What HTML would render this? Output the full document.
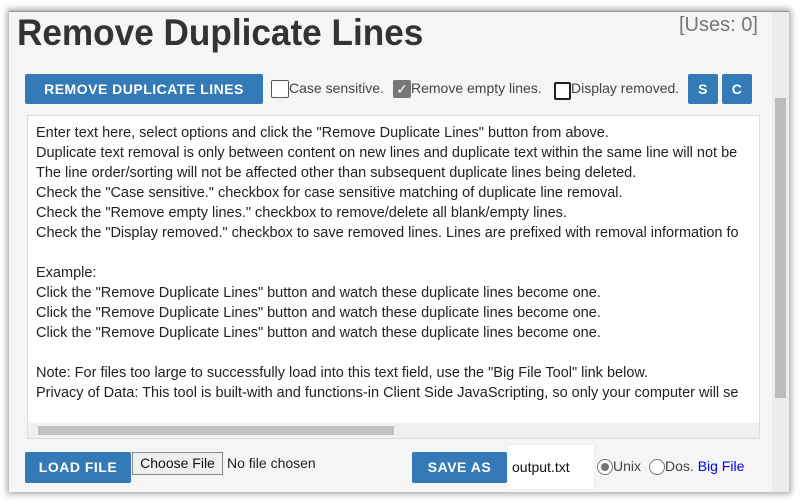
<!DOCTYPE html><html><head><style>
body{margin:0;width:800px;height:502px;background:#fff;font-family:"Liberation Sans",Arial,sans-serif;overflow:hidden;position:relative}
.win{position:absolute;left:9px;top:11px;width:780px;height:480px;background:#f5f5f5;box-shadow:0 0 6px 2px rgba(0,0,0,.35);border-top:1px solid #999}
.vs{position:absolute;left:763px;top:0;width:17px;height:480px;background:#ececec;z-index:5}
.vt{position:absolute;left:3px;top:86px;width:11px;height:300px;background:#bdbdbd}
h1{position:absolute;left:8px;top:0px;margin:0;font-size:37px;font-weight:bold;color:#333;transform:scaleX(.95);transform-origin:left}
.uses{position:absolute;left:670px;top:2px;font-size:20px;color:#777}
.btn{position:absolute;background:#337ab7;color:#fff;font-weight:bold;font-size:14px;text-align:center;border-radius:2px;letter-spacing:.5px}
.lbl{position:absolute;font-size:14px;color:#444}
.cb{position:absolute;width:16px;height:16px;border:1px solid #555;background:#fff;border-radius:2px}
.ta{position:absolute;left:18px;top:103px;width:731px;height:322px;background:#fff;border:1px solid #ddd;overflow:hidden}
.ta pre{margin:0;padding:7px 0 0 8px;font-family:inherit;font-size:14.5px;line-height:20px;color:#222;white-space:pre}
.hs{position:absolute;left:0;bottom:0;width:731px;height:15px;background:#f0f0f0}
.ht{position:absolute;left:10px;top:3px;width:356px;height:9px;background:#c1c1c1}
.vs2{position:absolute;right:0;top:0;width:14px;height:307px;background:#fff}
</style></head><body><div class="win">
<h1>Remove Duplicate Lines</h1>
<div class="uses">[Uses: 0]</div>
<div class="btn" style="left:16px;top:62px;width:238px;height:30px;line-height:30px">REMOVE DUPLICATE LINES</div>
<div class="cb" style="left:262px;top:68px"></div><div class="lbl" style="left:280px;top:68px">Case sensitive.</div>
<div class="cb" style="left:384px;top:68px;background:#777;border-color:#777;color:#fff;font-size:14px;line-height:16px;text-align:center">✓</div><div class="lbl" style="left:402px;top:68px">Remove empty lines.</div>
<div class="cb" style="left:545px;top:70px;width:13px;height:14px;border:2px solid #222"></div><div class="lbl" style="left:562px;top:68px">Display removed.</div>
<div class="btn" style="left:679px;top:62px;width:30px;height:30px;line-height:30px">S</div>
<div class="btn" style="left:713px;top:62px;width:30px;height:30px;line-height:30px">C</div>
<div class="ta"><pre>Enter text here, select options and click the "Remove Duplicate Lines" button from above.
Duplicate text removal is only between content on new lines and duplicate text within the same line will not be
The line order/sorting will not be affected other than subsequent duplicate lines being deleted.
Check the "Case sensitive." checkbox for case sensitive matching of duplicate line removal.
Check the "Remove empty lines." checkbox to remove/delete all blank/empty lines.
Check the "Display removed." checkbox to save removed lines. Lines are prefixed with removal information fo

Example:
Click the "Remove Duplicate Lines" button and watch these duplicate lines become one.
Click the "Remove Duplicate Lines" button and watch these duplicate lines become one.
Click the "Remove Duplicate Lines" button and watch these duplicate lines become one.

Note: For files too large to successfully load into this text field, use the "Big File Tool" link below.
Privacy of Data: This tool is built-with and functions-in Client Side JavaScripting, so only your computer will se</pre>
<div class="vs2"></div><div class="hs"><div class="ht"></div></div></div>
<div class="btn" style="left:16px;top:440px;width:106px;height:31px;line-height:31px">LOAD FILE</div>
<div style="position:absolute;left:123px;top:440px;width:89px;height:21px;border:1px solid #888;background:#efefef;font-size:14px;line-height:21px;text-align:center;color:#111">Choose File</div>
<div class="lbl" style="left:218px;top:443px;color:#222">No file chosen</div>
<div class="btn" style="left:403px;top:440px;width:95px;height:31px;line-height:31px">SAVE AS</div>
<div style="position:absolute;left:498px;top:432px;width:82px;height:44px;background:#fff;border:1px solid #eee;font-size:14px;line-height:44px;padding-left:4px;color:#111">output.txt</div>
<div style="position:absolute;left:588px;top:447px;width:14px;height:14px;border:1px solid #777;border-radius:50%;background:#fff"><div style="margin:3px;width:8px;height:8px;border-radius:50%;background:#777"></div></div>
<div class="lbl" style="left:604px;top:446px">Unix</div>
<div style="position:absolute;left:640px;top:447px;width:14px;height:14px;border:1px solid #777;border-radius:50%;background:#fff"></div>
<div class="lbl" style="left:656px;top:446px">Dos. <span style="color:#0000ee">Big File</span></div>
<div class="vs"><div class="vt"></div></div>
</div></body></html>
